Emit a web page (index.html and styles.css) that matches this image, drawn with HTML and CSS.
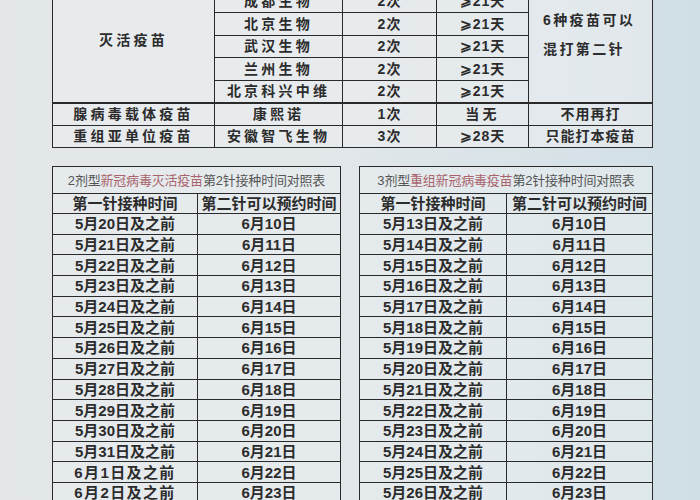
FILE: index.html
```html
<!DOCTYPE html>
<html lang="zh">
<head>
<meta charset="utf-8">
<link rel="stylesheet" href="styles.css">
</head>
<body>
<div class="sheet">
  <table class="main">
    <colgroup>
      <col class="c1"><col class="c2"><col class="c3"><col class="c4"><col class="c5">
    </colgroup>
    <tr>
      <td rowspan="6" class="type">灭活疫苗</td>
      <td>北京科兴</td><td class="num">2次</td><td class="num">⩾21天</td>
      <td rowspan="6" class="note"><p>6种疫苗可以</p><p>混打第二针</p></td>
    </tr>
    <tr><td>成都生物</td><td class="num">2次</td><td class="num">⩾21天</td></tr>
    <tr><td>北京生物</td><td class="num">2次</td><td class="num">⩾21天</td></tr>
    <tr><td>武汉生物</td><td class="num">2次</td><td class="num">⩾21天</td></tr>
    <tr><td>兰州生物</td><td class="num">2次</td><td class="num">⩾21天</td></tr>
    <tr><td>北京科兴中维</td><td class="num">2次</td><td class="num">⩾21天</td></tr>
    <tr class="sep"><td>腺病毒载体疫苗</td><td>康熙诺</td><td class="num">1次</td><td>当无</td><td class="tight">不用再打</td></tr>
    <tr><td>重组亚单位疫苗</td><td>安徽智飞生物</td><td class="num">3次</td><td class="num">⩾28天</td><td class="tight">只能打本疫苗</td></tr>
  </table>

  <div class="lower">
    <table class="sched sched-left">
      <colgroup><col class="l1"><col class="l2"></colgroup>
      <tr class="title"><td colspan="2">2剂型<span class="red">新冠病毒灭活疫苗</span>第2针接种时间对照表</td></tr>
      <tr class="head"><td>第一针接种时间</td><td>第二针可以预约时间</td></tr>
      <tr><td>5月20日及之前</td><td>6月10日</td></tr>
      <tr><td>5月21日及之前</td><td>6月11日</td></tr>
      <tr><td>5月22日及之前</td><td>6月12日</td></tr>
      <tr><td>5月23日及之前</td><td>6月13日</td></tr>
      <tr><td>5月24日及之前</td><td>6月14日</td></tr>
      <tr><td>5月25日及之前</td><td>6月15日</td></tr>
      <tr><td>5月26日及之前</td><td>6月16日</td></tr>
      <tr><td>5月27日及之前</td><td>6月17日</td></tr>
      <tr><td>5月28日及之前</td><td>6月18日</td></tr>
      <tr><td>5月29日及之前</td><td>6月19日</td></tr>
      <tr><td>5月30日及之前</td><td>6月20日</td></tr>
      <tr><td>5月31日及之前</td><td>6月21日</td></tr>
      <tr><td class="wide">6月1日及之前</td><td>6月22日</td></tr>
      <tr><td class="wide">6月2日及之前</td><td>6月23日</td></tr>
      <tr><td class="wide">6月3日及之前</td><td>6月24日</td></tr>
    </table>

    <table class="sched sched-right">
      <colgroup><col class="r1"><col class="r2"></colgroup>
      <tr class="title"><td colspan="2">3剂型<span class="red">重组新冠病毒疫苗</span>第2针接种时间对照表</td></tr>
      <tr class="head"><td>第一针接种时间</td><td>第二针可以预约时间</td></tr>
      <tr><td>5月13日及之前</td><td>6月10日</td></tr>
      <tr><td>5月14日及之前</td><td>6月11日</td></tr>
      <tr><td>5月15日及之前</td><td>6月12日</td></tr>
      <tr><td>5月16日及之前</td><td>6月13日</td></tr>
      <tr><td>5月17日及之前</td><td>6月14日</td></tr>
      <tr><td>5月18日及之前</td><td>6月15日</td></tr>
      <tr><td>5月19日及之前</td><td>6月16日</td></tr>
      <tr><td>5月20日及之前</td><td>6月17日</td></tr>
      <tr><td>5月21日及之前</td><td>6月18日</td></tr>
      <tr><td>5月22日及之前</td><td>6月19日</td></tr>
      <tr><td>5月23日及之前</td><td>6月20日</td></tr>
      <tr><td>5月24日及之前</td><td>6月21日</td></tr>
      <tr><td>5月25日及之前</td><td>6月22日</td></tr>
      <tr><td>5月26日及之前</td><td>6月23日</td></tr>
      <tr><td>5月27日及之前</td><td>6月24日</td></tr>
    </table>
  </div>
</div>
</body>
</html>
```

FILE: styles.css
```css
html, body {
  margin: 0;
  padding: 0;
}
body {
  width: 700px;
  height: 500px;
  overflow: hidden;
  background: linear-gradient(90deg, #e3e7ea 0%, #e2e7ea 45%, #d9e3e8 75%, #d0dfe6 100%);
  font-family: "Liberation Sans", "Noto Sans CJK SC", sans-serif;
  color: #2c2c2c;
}
.sheet {
  padding-left: 52px;
}

/* top table */
.main {
  border-collapse: collapse;
  table-layout: fixed;
  width: 600px;
  margin-top: -33px;
}
.c1 { width: 162px; }
.c2 { width: 128px; }
.c3 { width: 94px; }
.c4 { width: 92px; }
.c5 { width: 124px; }
.main tr { height: 22.5px; }
.main td {
  border: 1.5px solid #2a2a2a;
  padding: 0;
  text-align: center;
  vertical-align: middle;
  font-size: 14px;
  font-weight: 700;
  letter-spacing: 3.2px;
  line-height: 18px;
  background: rgba(236, 239, 241, 0.55);
  white-space: nowrap;
}
.main td.num { letter-spacing: 1px; }
.main td.tight { letter-spacing: 1px; }
.main td.type { padding-top: 11px; }
.main td.note {
  text-align: left;
  padding-left: 14px;
  letter-spacing: 2.4px;
}
.note p {
  margin: 0;
  line-height: 29px;
}
.main tr.sep td { border-top-width: 2.5px; }

/* lower tables */
.lower {
  display: flex;
  gap: 18px;
  margin-top: 18px;
  align-items: flex-start;
}
.sched {
  border-collapse: collapse;
  table-layout: fixed;
}
.sched-left { width: 288px; }
.sched-right { width: 293px; }
.l1 { width: 145px; }
.l2 { width: 143px; }
.r1 { width: 147px; }
.r2 { width: 146px; }
.sched tr { height: 20.7px; }
.sched td {
  border: 1.5px solid #2a2a2a;
  padding: 0;
  text-align: center;
  vertical-align: middle;
  font-size: 15px;
  font-weight: 700;
  line-height: 17px;
  background: rgba(232, 236, 239, 0.6);
  white-space: nowrap;
}
.sched td.wide { letter-spacing: 1.4px; }
.sched tr.title { height: 27px; }
.sched tr.title td {
  font-size: 13px;
  font-weight: 400;
  color: #555;
  letter-spacing: -0.2px;
}
.sched tr.head { height: 20px; }
.sched tr.head td { font-size: 15px; }
.red { color: #a9646c; }
```
